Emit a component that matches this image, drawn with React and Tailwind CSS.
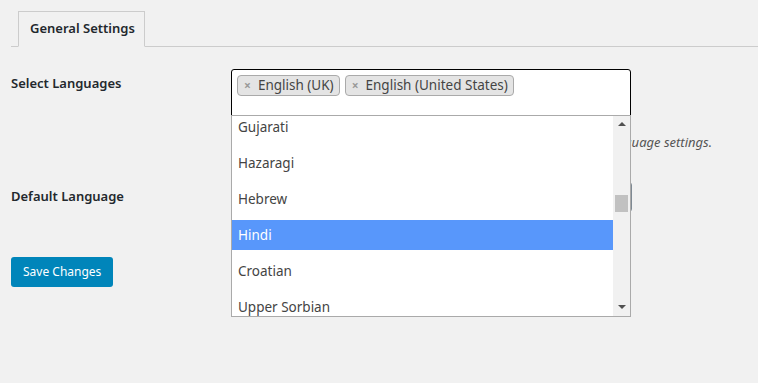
const options = ['Gujarati', 'Hazaragi', 'Hebrew', 'Hindi', 'Croatian', 'Upper Sorbian']

function Chip({ label }) {
  return (
    <span className="flex h-[21px] items-center rounded-[4px] border border-[#aaa] bg-[#e4e4e4] pl-[6px] pr-[5px] text-[13.5px] text-[#444]">
      <span className="mr-[7px] text-[12px] font-bold text-[#999]">×</span>
      {label}
    </span>
  )
}

export default function App() {
  return (
    <div className="min-h-[383px] bg-[#f1f1f1] pt-[11px] font-['Noto_Sans',sans-serif] text-[#23282d]">
      {/* Tabs */}
      <div className="ml-[11px] flex border-b border-[#ccc] pl-[7px]">
        <div className="-mb-px flex h-[36px] items-center border border-b-[#f1f1f1] border-[#ccc] bg-[#f1f1f1] pl-[11px] pr-[9px] text-[13px] font-semibold">
          General Settings
        </div>
      </div>

      {/* Form */}
      <div className="px-[11px] pt-[22px]">
        <div className="flex">
          <div className="w-[220px] pt-[5px] text-[13px] font-semibold">Select Languages</div>
          <div className="relative">
            <div className="flex h-[47px] w-[400px] items-start gap-[5px] rounded-t-[3px] border border-black bg-white px-[5px] pt-[5px]">
              <Chip label="English (UK)" />
              <Chip label="English (United States)" />
            </div>
            <div className="mt-[17px] flex w-[481px] justify-end overflow-hidden whitespace-nowrap text-[13px] italic text-[#555]">
              Choose the languages for your site. Visit the Languages page for language settings.
            </div>

            {/* Dropdown */}
            <div className="absolute left-0 top-[46px] z-10 flex h-[202px] w-[400px] border border-[#aaa] bg-white">
              <div className="flex-1 overflow-hidden">
                <div className="-mt-[4px]">
                  {options.map((o) => (
                    <div
                      key={o}
                      className={
                        o === 'Hindi'
                          ? 'mb-[6px] flex h-[30px] items-center bg-[#5897fb] px-[6px] pt-px text-[13.5px] text-white'
                          : 'mb-[6px] flex h-[30px] items-center px-[6px] pt-px text-[13.5px] text-[#444]'
                      }
                    >
                      {o}
                    </div>
                  ))}
                </div>
              </div>
              <div className="flex w-[17px] flex-col items-center bg-[#f1f1f1]">
                <svg width="8" height="4" viewBox="0 0 8 4" className="mt-[6px]">
                  <path d="M0 4 L4 0 L8 4 Z" fill="#505050" />
                </svg>
                <div className="mt-[69px] h-[17px] w-[13px] bg-[#c1c1c1]" />
                <div className="flex-1" />
                <svg width="8" height="4" viewBox="0 0 8 4" className="mb-[7px]">
                  <path d="M0 0 L8 0 L4 4 Z" fill="#505050" />
                </svg>
              </div>
            </div>
          </div>
        </div>

        <div className="mt-[29px] flex">
          <div className="w-[220px] pt-[5px] text-[13px] font-semibold">Default Language</div>
          <div className="h-[30px] w-[401px] rounded-[3px] border border-[#7e8993] bg-white" />
        </div>

        <button className="mt-[45px] h-[30px] rounded-[3px] bg-[#0085ba] px-[12px] text-[12px] text-white">
          Save Changes
        </button>
      </div>
    </div>
  )
}
